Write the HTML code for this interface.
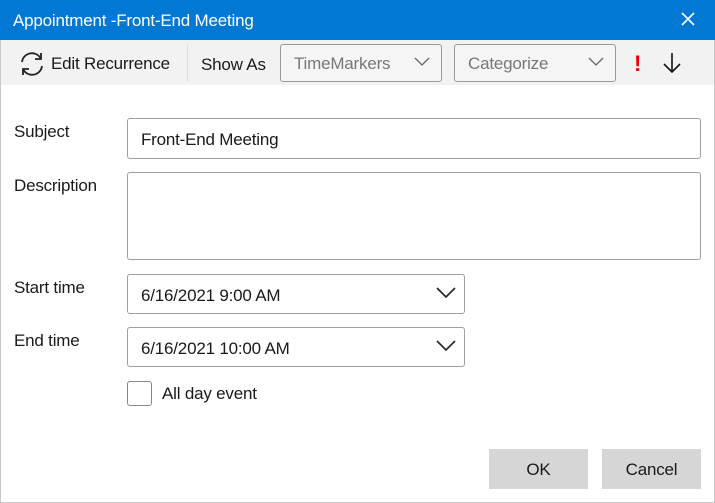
<!DOCTYPE html>
<html><head><style>
*{margin:0;padding:0;box-sizing:border-box}
body{width:715px;height:503px;background:#fff;font-family:"Liberation Sans",sans-serif;position:relative;overflow:hidden;color:#1a1a1a;letter-spacing:-0.2px}
.a{position:absolute}
.frame{left:0;top:0;width:715px;height:503px;border:1px solid #c8c8c8;border-top:none}
.title{left:0;top:0;width:715px;height:40px;background:#0078d4;color:#fff;font-size:17px;line-height:41px;padding-left:13px}
.tb{left:1px;top:40px;width:713px;height:45px;background:#f2f2f2}
.t{font-size:17px}
.combo{border:1px solid #9a9a9a;border-radius:3px;background:#f5f5f5;color:#777;font-size:17px;line-height:37px;padding-left:13px}
.box{border:1px solid #a0a0a0;border-radius:3px;background:#fff;font-size:17px;padding-left:13px}
.btn{background:#d6d6d6;font-size:17px;text-align:center;line-height:41px}
</style></head><body>
<div class="a frame"></div>
<div class="a title">Appointment -Front-End Meeting</div>
<svg class="a" style="left:680px;top:11px" width="16" height="16"><path d="M2 2L14 14M14 2L2 14" stroke="#fff" stroke-width="1.6"/></svg>
<div class="a tb"></div>
<svg class="a" style="left:18px;top:50px" width="28" height="28" viewBox="0 0 28 28" fill="none" stroke="#222" stroke-width="1.8"><path d="M4 12A10 10 0 0 1 23 9"/><path d="M23 3V9H17"/><path d="M24 16A10 10 0 0 1 5 19"/><path d="M5 25V19H11"/></svg>
<div class="a t" style="left:51px;top:54px">Edit Recurrence</div>
<div class="a" style="left:187px;top:44px;width:1px;height:38px;background:#dcdcdc"></div>
<div class="a t" style="left:201px;top:55px">Show As</div>
<div class="a combo" style="left:280px;top:44px;width:162px;height:38px">TimeMarkers</div>
<svg class="a" style="left:414px;top:57px" width="16" height="10"><path d="M1 1L8 8L15 1" fill="none" stroke="#666" stroke-width="1.3"/></svg>
<div class="a combo" style="left:454px;top:44px;width:162px;height:38px">Categorize</div>
<svg class="a" style="left:588px;top:57px" width="16" height="10"><path d="M1 1L8 8L15 1" fill="none" stroke="#666" stroke-width="1.3"/></svg>
<div class="a" style="left:634px;top:51px;color:#e00;font-size:22px;font-weight:bold">!</div>
<svg class="a" style="left:662px;top:52px" width="20" height="22"><path d="M10 1V20M2 12L10 20L18 12" fill="none" stroke="#111" stroke-width="1.6"/></svg>
<div class="a t" style="left:14px;top:122px">Subject</div>
<div class="a box" style="left:127px;top:118px;width:574px;height:41px;line-height:41px">Front-End Meeting</div>
<div class="a t" style="left:14px;top:176px">Description</div>
<div class="a box" style="left:127px;top:172px;width:574px;height:88px"></div>
<div class="a t" style="left:14px;top:278px">Start time</div>
<div class="a box" style="left:127px;top:274px;width:338px;height:40px;line-height:42px">6/16/2021 9:00 AM</div>
<svg class="a" style="left:436px;top:287px" width="20" height="12"><path d="M1 1L10 10L19 1" fill="none" stroke="#222" stroke-width="1.6"/></svg>
<div class="a t" style="left:14px;top:331px">End time</div>
<div class="a box" style="left:127px;top:327px;width:338px;height:40px;line-height:42px">6/16/2021 10:00 AM</div>
<svg class="a" style="left:436px;top:340px" width="20" height="12"><path d="M1 1L10 10L19 1" fill="none" stroke="#222" stroke-width="1.6"/></svg>
<div class="a" style="left:127px;top:381px;width:25px;height:25px;border:1px solid #888;border-radius:3px;background:#fff"></div>
<div class="a t" style="left:162px;top:384px">All day event</div>
<div class="a btn" style="left:489px;top:449px;width:99px;height:40px">OK</div>
<div class="a btn" style="left:602px;top:449px;width:99px;height:40px">Cancel</div>
</body></html>
